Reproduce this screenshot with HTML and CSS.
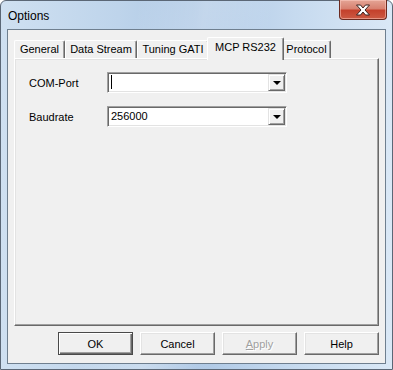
FILE: index.html
```html
<!DOCTYPE html>
<html lang="en">
<head>
  <meta charset="UTF-8" />
  <title>Options</title>
  <link rel="stylesheet" href="styles.css">
</head>
<body>

<div class="window">
  <div class="titlebar">
    <span class="title">Options</span>
    <button class="close-btn" aria-label="Close">
      <svg width="16" height="12" viewBox="0 0 16 12">
        <path d="M1.5 1 H5.5 L8 4 L10.5 1 H14.5 L10 6 L14.5 11 H10.5 L8 8 L5.5 11 H1.5 L6 6 Z" fill="#fff" stroke="#3b2320" stroke-width="1" stroke-linejoin="round"/>
      </svg>
    </button>
  </div>

  <div class="client">
    <div class="tabs">
      <div class="tab" style="width:51px">General</div>
      <div class="tab" style="width:72px">Data Stream</div>
      <div class="tab" style="width:72px">Tuning GATI</div>
      <div class="tab active" style="width:77px">MCP RS232</div>
      <div class="tab" style="width:49px">Protocol</div>
    </div>

    <div class="panel">
      <div class="row">
        <label>COM-Port</label>
        <div class="combo">
          <span class="value"><span class="caret"></span></span>
          <span class="drop"><span class="arrow"></span></span>
        </div>
      </div>
      <div class="row">
        <label>Baudrate</label>
        <div class="combo">
          <span class="value">256000</span>
          <span class="drop"><span class="arrow"></span></span>
        </div>
      </div>
    </div>

    <div class="buttons">
      <button class="btn default">OK</button>
      <button class="btn">Cancel</button>
      <button class="btn disabled"><u>A</u>pply</button>
      <button class="btn">Help</button>
    </div>
  </div>
</div>

</body>
</html>
```

FILE: styles.css
```css
body {
  margin: 0;
  font-family: "Liberation Sans", Arial, sans-serif;
  font-size: 11px;
  color: #000;
  background: #fff;
}

.window {
  width: 393px;
  height: 370px;
  box-sizing: border-box;
  border: 1px solid #5b6776;
  border-radius: 6px 6px 0 0;
  background:
    linear-gradient(100deg, rgba(255,255,255,0) 30%, rgba(255,255,255,0.25) 45%, rgba(255,255,255,0) 60%),
    linear-gradient(90deg, #cfe0f1 0%, #bed4eb 30%, #aec8e5 50%, #c6daef 75%, #dae8f6 100%);
  padding: 0 6px 5px 6px;
  display: flex;
  flex-direction: column;
}

.titlebar {
  height: 28px;
  display: flex;
  justify-content: space-between;
  align-items: flex-start;
}

.title {
  font-size: 12px;
  margin: 8px 0 0 1px;
  color: #000;
}

.close-btn {
  width: 48px;
  height: 20px;
  margin: -1px -1px 0 0;
  padding: 0;
  border: 1px solid #6b2a20;
  border-top: none;
  border-radius: 0 0 4px 4px;
  background: linear-gradient(#e4a596 0%, #d88170 45%, #c4412c 55%, #cc5a43 100%);
  box-shadow: inset 0 0 0 1px rgba(255,210,200,0.5);
  display: flex;
  align-items: center;
  justify-content: center;
}

.client {
  flex: 1;
  border: 1px solid #6f7f8f;
  background: #f0f0f0;
  padding: 7px 6px 0 6px;
  display: flex;
  flex-direction: column;
}

.tabs {
  display: flex;
  align-items: flex-end;
  height: 21px;
  position: relative;
  z-index: 1;
}

.tab {
  box-sizing: border-box;
  height: 18px;
  border-top: 1px solid #fff;
  border-left: 1px solid #fff;
  border-right: 1px solid #696969;
  box-shadow: inset -1px 0 0 #a0a0a0;
  border-radius: 2px 2px 0 0;
  text-align: center;
  line-height: 17px;
  white-space: nowrap;
  background: #f0f0f0;
}

.tab.active {
  height: 23px;
  margin: 0 -2px -2px -2px;
  line-height: 19px;
  position: relative;
}

.panel {
  flex: 1;
  border-top: 1px solid #fff;
  border-left: 1px solid #fff;
  border-right: 1px solid #696969;
  border-bottom: 1px solid #696969;
  box-shadow: inset -1px -1px 0 #a0a0a0, inset 1px 1px 0 #e3e3e3;
  padding: 13px 0 0 14px;
}

.row {
  display: flex;
  align-items: center;
  height: 21px;
  margin-bottom: 13px;
}

.row label {
  width: 78px;
}

.combo {
  box-sizing: border-box;
  width: 180px;
  height: 21px;
  border-top: 1px solid #a0a0a0;
  border-left: 1px solid #a0a0a0;
  border-right: 1px solid #fff;
  border-bottom: 1px solid #fff;
  box-shadow: inset 1px 1px 0 #696969, inset -1px -1px 0 #e3e3e3;
  background: #fff;
  display: flex;
  padding: 1px;
}

.value {
  flex: 1;
  padding-left: 2px;
  line-height: 17px;
}

.caret {
  display: inline-block;
  width: 1px;
  height: 14px;
  background: #000;
  vertical-align: middle;
  margin-top: -2px;
}

.drop {
  box-sizing: border-box;
  width: 17px;
  height: 17px;
  border-top: 1px solid #e3e3e3;
  border-left: 1px solid #e3e3e3;
  border-right: 1px solid #696969;
  border-bottom: 1px solid #696969;
  box-shadow: inset 1px 1px 0 #fff, inset -1px -1px 0 #a0a0a0;
  background: #f0f0f0;
  display: flex;
  align-items: center;
  justify-content: center;
}

.arrow {
  width: 0;
  height: 0;
  border-left: 4px solid transparent;
  border-right: 4px solid transparent;
  border-top: 4px solid #000;
  margin-top: 1px;
}

.buttons {
  display: flex;
  justify-content: flex-end;
  gap: 7px;
  margin-top: 6px;
  padding-bottom: 8px;
}

.btn {
  box-sizing: border-box;
  width: 75px;
  height: 23px;
  font-family: "Liberation Sans", Arial, sans-serif;
  font-size: 11px;
  color: #000;
  background: #f0f0f0;
  border-top: 1px solid #fff;
  border-left: 1px solid #fff;
  border-right: 1px solid #696969;
  border-bottom: 1px solid #696969;
  box-shadow: inset -1px -1px 0 #a0a0a0, inset 1px 1px 0 #e3e3e3;
  padding: 0;
}

.btn.default {
  border: 1px solid #4a4a4a;
  box-shadow: inset 1px 1px 0 #fff, inset -1px -1px 0 #696969, inset -2px -2px 0 #a0a0a0;
}

.btn.disabled {
  color: #a0a0a0;
  text-shadow: 1px 1px 0 #fff;
}
```
